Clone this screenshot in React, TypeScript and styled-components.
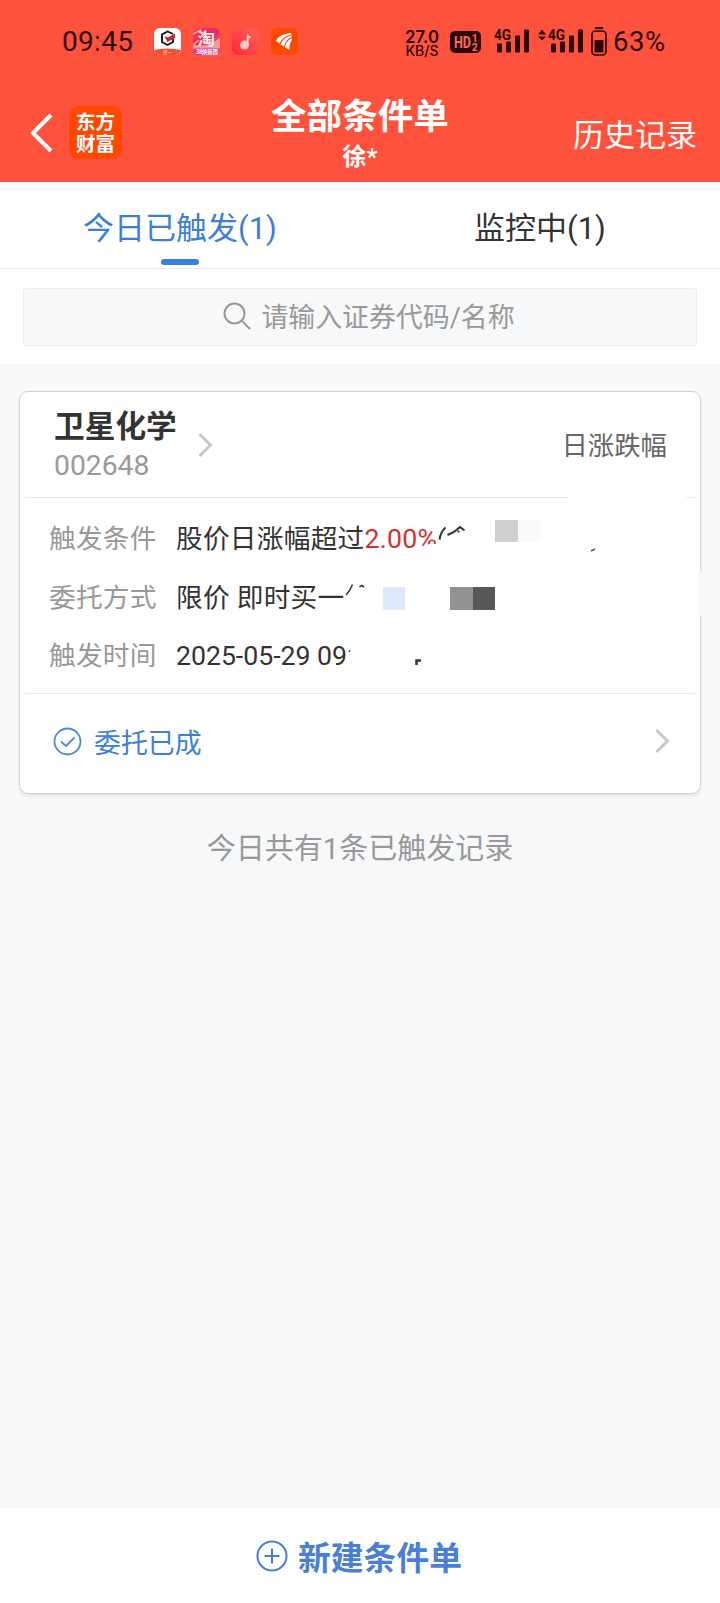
import React from "react";
import styled, { createGlobalStyle } from "styled-components";

const Global = createGlobalStyle`
  * { box-sizing: border-box; }
  body { margin: 0; background: #f7f8fa; }
`;

const Screen = styled.div`
  width: 720px;
  height: 1603px;
  display: flex;
  flex-direction: column;
  background: #f7f8fa;
  font-family: Roboto, "Noto Sans CJK SC", sans-serif;
  color: #333;
  white-space: nowrap;
  overflow: hidden;
`;

const Header = styled.header`
  height: 182px;
  background: #ff523c;
  color: #fff;
`;

const StatusBar = styled.div`
  height: 83px;
  padding: 0 54px 0 62px;
  display: flex;
  align-items: center;
  color: #2b0907;
`;

const Clock = styled.span`
  width: 92px;
  font: 400 28px/32px Roboto, sans-serif;
  letter-spacing: 0.3px;
`;

const AppIcons = styled.div`
  display: flex;
  gap: 12px;
  svg { overflow: visible; }
`;

const StatusRight = styled.div`
  display: flex;
  align-items: center;
  margin-left: auto;
  svg { overflow: visible; }
`;

const NavBar = styled.div`
  height: 99px;
  padding: 0 23px 0 30px;
  display: grid;
  grid-template-columns: 180px 1fr 187px;
  align-items: center;
`;

const NavLeft = styled.div`
  display: flex;
  align-items: center;
  gap: 16px;
`;

const Brand = styled.div`
  width: 53px;
  height: 53px;
  margin-bottom: 1px;
  border-radius: 10px;
  background: #ff4800;
  display: flex;
  flex-direction: column;
  align-items: center;
  justify-content: center;
  padding-bottom: 1px;
  font: 700 19.5px/22px "Noto Sans CJK SC", sans-serif;
`;

const TitleBlock = styled.div`
  text-align: center;
  padding-top: 7px;
`;

const Title = styled.h1`
  margin: 0;
  font-size: 35.6px;
  line-height: 42px;
  font-weight: 700;
`;

const Subtitle = styled.div`
  font-size: 24px;
  line-height: 38px;
  font-weight: 700;
`;

const HistoryLink = styled.div`
  text-align: right;
  font-size: 31px;
  line-height: 40px;
  padding-top: 6px;
`;

const Tabs = styled.nav`
  height: 87px;
  display: flex;
  background: #fff;
  border-bottom: 1px solid #ebecee;
`;

const Tab = styled.div<{ $active?: boolean }>`
  flex: 1;
  display: flex;
  flex-direction: column;
  align-items: center;
  justify-content: space-between;
  padding: 25px 0 3px;
  font-size: 31px;
  line-height: 44px;
  color: ${(p) => (p.$active ? "#3c7fd6" : "#333")};
  &::after {
    content: "";
    width: 38px;
    height: 6px;
    border-radius: 3px;
    background: ${(p) => (p.$active ? "#3780df" : "transparent")};
  }
`;

const SearchSection = styled.div`
  height: 95px;
  padding: 19px 23px 18px;
  background: #fff;
`;

const SearchBox = styled.div`
  height: 58px;
  border: 1px solid #ebecee;
  border-radius: 3px;
  background: #f7f8fa;
  display: flex;
  align-items: center;
  justify-content: center;
  gap: 10px;
  padding-left: 18px;
  color: #999;
  font-size: 26.9px;
  line-height: 40px;
  svg { margin-bottom: 3px; }
  span { padding-top: 2px; }
`;

const Main = styled.main`
  flex: 1;
  padding: 27px 19px 0;
`;

const Card = styled.section`
  position: relative;
  height: 403px;
  border: 1px solid #cfd2d3;
  border-radius: 9px;
  background: #fff;
  box-shadow: 0 3px 3px rgba(40, 50, 60, 0.08);
  padding: 0 5px;
`;

const CardHeader = styled.div`
  height: 106px;
  padding: 0 28px 0 29px;
  display: flex;
  align-items: center;
  border-bottom: 1px solid #ebebeb;
`;

const StockName = styled.div`
  width: 144px;
  padding-top: 2px;
  font-size: 30.7px;
  line-height: 40px;
  font-weight: 700;
`;

const StockCode = styled.div`
  font-size: 28.3px;
  line-height: 38px;
  font-weight: 400;
  color: #999;
`;

const OrderKind = styled.div`
  margin-left: auto;
  font-size: 26.4px;
  line-height: 40px;
  padding-top: 2px;
  color: #666;
`;

const Details = styled.div`
  height: 196px;
  padding: 12px 0 0 24px;
  border-bottom: 1px solid #ebebeb;
`;

const DetailRow = styled.div`
  height: 58.5px;
  display: grid;
  grid-template-columns: 127px 1fr;
  align-items: center;
  font-size: 26.7px;
  line-height: 40px;
  letter-spacing: 0.25px;
`;

const Label = styled.span`
  color: #999;
`;

const Percent = styled.span`
  color: #d42f2f;
`;

const Timestamp = styled.span`
  letter-spacing: -0.03px;
`;

const ResultRow = styled.div`
  height: 98px;
  padding: 0 25px 4px 28px;
  display: flex;
  align-items: center;
  gap: 12px;
  font-size: 26.9px;
  color: #3c7fd6;
  svg:last-child { margin-left: auto; }
`;

const Redaction = styled.svg`
  position: absolute;
  left: -1px;
  top: -1px;
`;

const Summary = styled.p`
  margin: 34px 0 0;
  text-align: center;
  font-size: 29px;
  line-height: 42px;
  color: #999;
`;

const CreateBar = styled.footer`
  height: 95px;
  display: flex;
  align-items: center;
  justify-content: center;
  gap: 10px;
  background: #fff;
  color: #4a7fd8;
  font-size: 32.8px;
  font-weight: 700;
  padding: 0 2px 0 0;
`;

const Chevron = () => (
  <svg width="15" height="26" viewBox="0 0 15 26" fill="none" stroke="#c8c8c8" strokeWidth="3">
    <path d="M1.500 2L12.500 13L1.500 24" />
  </svg>
);

const Signal = ({ arrows }: { arrows?: boolean }) => (
  <svg width={arrows ? 47 : 37} height="30" viewBox={arrows ? "-10 0 47 30" : "0 0 37 30"} fill="#2b0907">
    {arrows && <path d="M-10 7.500L-6 2.500L-2 7.500ZM-10 9.500L-6 13.500L-2 9.500Z" />}
    <rect x="3" y="16.500" width="5" height="9" rx="1" />
    <rect x="12" y="14.500" width="5" height="11" rx="1" />
    <rect x="21" y="8.500" width="5" height="17" rx="1" />
    <rect x="30" y="2.500" width="5" height="23" rx="1" />
    <text x="0" y="13" fontFamily="Roboto" fontWeight="700" fontSize="15.500" textLength="17" lengthAdjust="spacingAndGlyphs" stroke="#ff523c" strokeWidth="1.500" paintOrder="stroke">4G</text>
  </svg>
);

const StatusIcons = () => (
  <AppIcons>
    <svg width="27" height="27" viewBox="0 0 27 27">
      <defs><clipPath id="round"><rect width="27" height="27" rx="6" /></clipPath></defs>
      <g clipPath="url(#round)">
        <rect width="27" height="27" fill="#fff" />
        <path d="M0 22Q13 19 27 22V27H0Z" fill="#f0522c" />
        <path d="M19 6L13.500 3.500L8 6.500V14L13.500 17L19 14V11" fill="none" stroke="#151515" strokeWidth="1.900" />
        <path d="M10.500 8L14 9.500L21 5.500V10L13.500 14Z" fill="#d21d2b" />
        <text x="9" y="25.500" fontSize="4.500" fill="#ffd9c8" fontFamily="Noto Sans CJK SC">择一</text>
      </g>
    </svg>
    <svg width="27" height="27" viewBox="0 0 27 27">
      <defs>
        <linearGradient id="tb" x1="0" y1="0" x2="1" y2="1">
          <stop offset="0" stopColor="#ff315c" /><stop offset=".5" stopColor="#e92665" /><stop offset="1" stopColor="#f679a5" />
        </linearGradient>
      </defs>
      <g clipPath="url(#round)">
        <rect width="27" height="27" fill="url(#tb)" />
        <path d="M0 16Q12 21 27 10V20Q14 25 0 21Z" fill="#f49a9b" />
        <path d="M0 6L8 2M1 16L6 12" stroke="#ffb85e" strokeWidth="1.500" />
        <rect y="20.500" width="27" height="7" fill="#d43c94" />
      </g>
      <text x="4.500" y="17" fontSize="17.500" fontWeight="700" fill="#fff2e5" fontFamily="Noto Sans CJK SC">淘</text>
      <text x="3" y="26" fontSize="5.500" fontWeight="700" fill="#fff" fontFamily="Noto Sans CJK SC" textLength="22">38焕新周</text>
    </svg>
    <svg width="27" height="27" viewBox="0 0 27 27">
      <defs><linearGradient id="music" x1="1" y1="0" x2="0" y2="1"><stop stopColor="#ff654f" /><stop offset="1" stopColor="#ff2540" /></linearGradient></defs>
      <rect width="27" height="27" rx="6" fill="url(#music)" />
      <circle cx="12.500" cy="17" r="4.500" fill="#ffc4bd" />
      <path d="M14.800 17V6L19.500 9.500L16.500 10.500V17Z" fill="#ffe0da" />
    </svg>
    <svg width="27" height="27" viewBox="0 0 27 27">
      <rect width="27" height="27" rx="6" fill="#ff4800" />
      <path d="M5 13Q8 6 20 5L20.500 6.500Q12 8 8.500 15.500ZM9.500 16.500Q12 9.500 20.500 7.500V9Q14.500 11.500 13 18.500ZM14 19.500Q14.500 13.500 20.500 10L21 12Q18 16 18.500 22Z" fill="#fff" />
    </svg>
  </AppIcons>
);

const Speed = () => (
  <svg width="36" height="32" viewBox="0 0 36 32" fill="#2b0907" fontFamily="Inter" fontWeight="600">
    <text x="1" y="16.500" fontSize="17.500" textLength="34" lengthAdjust="spacingAndGlyphs">27.0</text>
    <text x="1.500" y="29.500" fontSize="14" fontWeight="500" textLength="33" lengthAdjust="spacingAndGlyphs">KB/S</text>
  </svg>
);

const HdBadge = () => (
  <svg width="31" height="22" viewBox="0 0 31 22" fontFamily="Roboto" fontWeight="700" fill="#ff6a56">
    <rect width="31" height="22" rx="5" fill="#2b0907" />
    <text x="4" y="16.800" fontSize="17" textLength="17" lengthAdjust="spacingAndGlyphs">HD</text>
    <text x="21.800" y="10.500" fontSize="10.500">1</text>
    <text x="21.800" y="19.500" fontSize="10.500">2</text>
  </svg>
);

const Battery = () => (
  <svg width="16" height="30" viewBox="0 0 16 30">
    <path d="M4 1H12" stroke="#2b0907" strokeWidth="2" />
    <rect x="1" y="4" width="14" height="24" rx="3.500" fill="none" stroke="#2b0907" strokeWidth="1.700" />
    <rect x="3.500" y="13" width="9" height="12.500" rx="1" fill="#2b0907" />
  </svg>
);

const BatteryText = styled.span`
  font: 400 27.5px/32px Roboto, sans-serif;
  letter-spacing: 0.6px;
  width: 53px;
`;

const Spacer = styled.i<{ $w: number }>`
  width: ${(p) => p.$w}px;
`;

const details = [
  { label: "触发条件", value: <>股价日涨幅超过<Percent>2.00%</Percent></> },
  { label: "委托方式", value: "限价 即时买一" },
  { label: "触发时间", value: <Timestamp>2025-05-29 09</Timestamp> },
];

export default function App() {
  return (
    <Screen>
      <Global />
      <Header>
        <StatusBar>
          <Clock>09:45</Clock>
          <StatusIcons />
          <StatusRight>
            <Speed />
            <Spacer $w={10} />
            <HdBadge />
            <Spacer $w={13} />
            <Signal />
            <Spacer $w={7} />
            <Signal arrows />
            <Spacer $w={6} />
            <Battery />
            <Spacer $w={6} />
            <BatteryText>63%</BatteryText>
          </StatusRight>
        </StatusBar>
        <NavBar>
          <NavLeft>
            <svg width="23" height="42" viewBox="0 0 23 42" fill="none" stroke="#fff" strokeWidth="4">
              <path d="M21 3L3 21L21 39" />
            </svg>
            <Brand><span>东方</span><span>财富</span></Brand>
          </NavLeft>
          <TitleBlock>
            <Title>全部条件单</Title>
            <Subtitle>徐*</Subtitle>
          </TitleBlock>
          <HistoryLink>历史记录</HistoryLink>
        </NavBar>
      </Header>
      <Tabs>
        <Tab $active>今日已触发(1)</Tab>
        <Tab>监控中(1)</Tab>
      </Tabs>
      <SearchSection>
        <SearchBox>
          <svg width="28" height="28" viewBox="0 0 28 28" fill="none" stroke="#999" strokeWidth="2">
            <circle cx="11.500" cy="11.500" r="10" />
            <path d="M18.500 18.500L27 27" />
          </svg>
          <span>请输入证券代码/名称</span>
        </SearchBox>
      </SearchSection>
      <Main>
        <Card>
          <CardHeader>
            <StockName>
              卫星化学
              <StockCode>002648</StockCode>
            </StockName>
            <Chevron />
            <OrderKind>日涨跌幅</OrderKind>
          </CardHeader>
          <Details>
            {details.map((d) => (
              <DetailRow key={d.label}>
                <Label>{d.label}</Label>
                <span>{d.value}</span>
              </DetailRow>
            ))}
          </Details>
          <ResultRow>
            <svg width="29" height="29" viewBox="0 0 29 29" fill="none" stroke="#4b8bd9" strokeWidth="1.800">
              <circle cx="14.500" cy="14.500" r="13" />
              <path d="M8 14.500L13 19L21.500 10.500" />
            </svg>
            <span>委托已成</span>
            <Chevron />
          </ResultRow>
          <Redaction width="684" height="403" viewBox="19 391 684 403" fill="none">
            <path d="M568 495H686V500H568Z" fill="#fff" />
            <path d="M698 571H703V616H698Z" fill="#f7f8fa" />
            <path d="M426 552V546L429 544H440V552Z" fill="#fff" />
            <path d="M439.500 539.500Q440.500 532 445.500 527.500M447.500 535L454 532L460 527L464.500 530.500M457.500 531.500H459.500" stroke="#333" strokeWidth="2" />
            <path d="M346 595Q350 591 352.500 584.500M359.500 587L361.500 585.500L364 587" stroke="#333" strokeWidth="1.500" />
            <path d="M591 551L595 549M349 652L350 650" stroke="#555" strokeWidth="1.500" />
            <path d="M416.500 665V660.500H421" stroke="#333" strokeWidth="2.500" />
            <path d="M495 520H518V542H495Z" fill="#cfcfcf" />
            <path d="M518 520H540V542H518Z" fill="#fafafa" />
            <path d="M383 587H405V610H383Z" fill="#dce9f8" />
            <path d="M450 587H473V610H450Z" fill="#929292" />
            <path d="M473 587H495V610H473Z" fill="#585858" />
          </Redaction>
        </Card>
        <Summary>今日共有1条已触发记录</Summary>
      </Main>
      <CreateBar>
        <svg width="32" height="32" viewBox="0 0 32 32" fill="none" stroke="#4a7fd0" strokeWidth="2">
          <circle cx="16" cy="16" r="14.500" />
          <path d="M8.500 16H23.500M16 8.500V23.500" />
        </svg>
        <span>新建条件单</span>
      </CreateBar>
    </Screen>
  );
}
